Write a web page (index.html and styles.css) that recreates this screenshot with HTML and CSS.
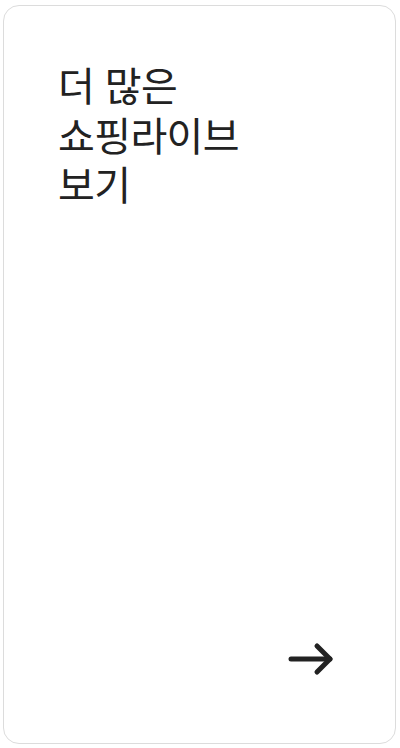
FILE: index.html
```html
<!DOCTYPE html>
<html lang="ko">
<head>
<meta charset="utf-8">
<link rel="stylesheet" href="styles.css">
</head>
<body>
<div class="card">
  <h1 class="title">더 많은<br>쇼핑라이브<br>보기</h1>
  <div class="footer">
    <svg class="arrow" width="46" height="34" viewBox="0 0 46 34" fill="none" stroke="#222" stroke-width="5" stroke-linecap="round" stroke-linejoin="round">
      <path d="M3 17H42"/>
      <path d="M29 4L42 17L29 30"/>
    </svg>
  </div>
</div>
</body>
</html>
```
FILE: styles.css
```css
html, body {
  margin: 0;
  padding: 0;
  background: #fff;
}
body {
  padding: 5px 4px 4px 3px;
  font-family: "Noto Sans CJK KR", "Noto Sans", sans-serif;
}
.card {
  box-sizing: border-box;
  width: 393px;
  height: 739px;
  border: 1px solid #dcdcdc;
  border-radius: 16px;
  display: flex;
  flex-direction: column;
  justify-content: space-between;
  padding: 54px 61px 67px 54px;
}
.title {
  margin: 0;
  font-size: 40px;
  font-weight: 400;
  line-height: 49.5px;
  color: #222;
  letter-spacing: -0.6px;
}
.footer {
  display: flex;
  justify-content: flex-end;
}
.arrow {
  display: block;
}
```
